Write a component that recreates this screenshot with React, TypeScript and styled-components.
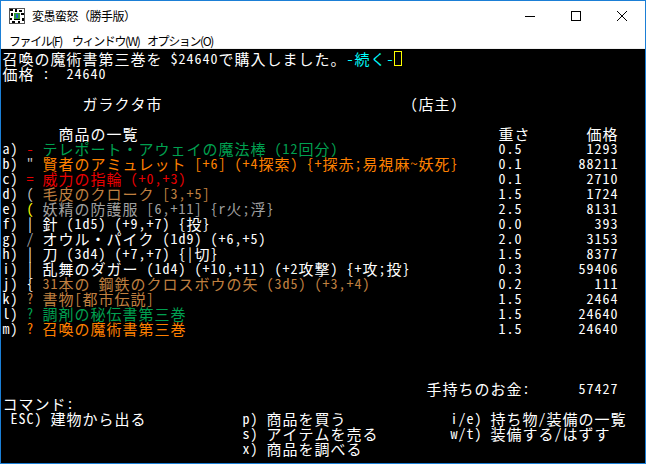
import React from 'react';
import styled, { createGlobalStyle } from 'styled-components';

const GlobalStyle = createGlobalStyle`
  html, body { margin: 0; padding: 0; background: #ffffff; }
  body { width: 646px; height: 464px; overflow: hidden; }
  * { box-sizing: border-box; }
`;

const UI_FONT = `"Noto Sans CJK JP", "Noto Sans", sans-serif`;
const TERM_FONT = `"Noto Sans Mono CJK JP", "Noto Sans CJK JP", "DejaVu Sans Mono", monospace`;

const COL = {
  white: '#ffffff',
  lwhite: '#c0c0c0',
  slate: '#a0a0a0',
  red: '#e80000',
  green: '#00a050',
  orange: '#ff8000',
  lumber: '#c08040',
  yellow: '#ffff00',
  cyan: '#00ffff',
};

const Window = styled.div`
  width: 646px;
  height: 464px;
  border: 1px solid #1b7fd6;
  display: flex;
  flex-direction: column;
  background: #ffffff;
`;

const TitleBar = styled.div`
  height: 30px;
  display: flex;
  align-items: center;
  flex: none;
`;

const IconBox = styled.div`
  width: 16px;
  height: 16px;
  margin: 0 7px 0 8px;
  display: flex;
`;

const TitleText = styled.div`
  flex: 1;
  font-family: ${UI_FONT};
  font-size: 12px;
  letter-spacing: -0.5px;
  color: #000000;
  padding-bottom: 1px;
`;

const WinButton = styled.div`
  width: 46px;
  height: 29px;
  display: flex;
  align-items: center;
  justify-content: center;
`;

const MenuBar = styled.div`
  height: 18px;
  flex: none;
  display: grid;
  grid-template-columns: 63px 75px auto;
  align-items: center;
  padding-left: 8px;
  border-bottom: 1px solid #f0f0f0;
`;

const MenuItem = styled.div`
  font-family: ${UI_FONT};
  font-size: 12px;
  letter-spacing: -1.4px;
  line-height: 18px;
  padding-top: 1px;
  color: #000000;
  white-space: nowrap;
`;

const Terminal = styled.div`
  flex: 1;
  background: #000000;
  padding: 2px 0 0 1px;
  display: flex;
  flex-direction: column;
`;

const TermLine = styled.div`
  height: 15px;
  display: flex;
  flex: none;
`;

const Cell = styled.span<{ $wide: boolean; $color: string }>`
  display: inline-block;
  width: ${(p) => (p.$wide ? 16 : 8)}px;
  height: 15px;
  line-height: 15px;
  text-align: center;
  font-family: ${TERM_FONT};
  font-size: ${(p) => (p.$wide ? 15 : 14)}px;
  color: ${(p) => p.$color};
  white-space: pre;
  overflow: visible;
`;

const Gap = styled.span<{ $cols: number }>`
  display: inline-block;
  width: ${(p) => p.$cols * 8}px;
  flex: none;
`;

const Cursor = styled.span`
  display: inline-block;
  width: 8px;
  height: 15px;
  border: 1px solid #ffff00;
`;

type Seg = [number, string, string];

const isWide = (ch: string) => {
  const c = ch.codePointAt(0) || 0;
  return (
    (c >= 0x1100 && c <= 0x115f) ||
    (c >= 0x2e80 && c <= 0xa4cf) ||
    (c >= 0xac00 && c <= 0xd7a3) ||
    (c >= 0xf900 && c <= 0xfaff) ||
    (c >= 0xfe30 && c <= 0xfe4f) ||
    (c >= 0xff00 && c <= 0xff60) ||
    (c >= 0xffe0 && c <= 0xffe6)
  );
};

const Line: React.FC<{ segs: Seg[]; cursorAt?: number }> = ({ segs, cursorAt }) => {
  const out: React.ReactNode[] = [];
  let cur = 0;
  let key = 0;
  const sorted = [...segs].sort((a, b) => a[0] - b[0]);
  for (const [col, text, color] of sorted) {
    if (col > cur) {
      out.push(<Gap key={key++} $cols={col - cur} />);
      cur = col;
    }
    for (const ch of Array.from(text)) {
      const w = isWide(ch);
      out.push(
        <Cell key={key++} $wide={w} $color={color}>
          {ch}
        </Cell>
      );
      cur += w ? 2 : 1;
    }
  }
  if (cursorAt !== undefined) {
    if (cursorAt > cur) out.push(<Gap key={key++} $cols={cursorAt - cur} />);
    out.push(<Cursor key={key++} />);
  }
  return <TermLine>{out}</TermLine>;
};

type Item = {
  letter: string;
  sym: string;
  symColor: string;
  name: string;
  color: string;
  weight: string;
  price: string;
};

const items: Item[] = [
  { letter: 'a', sym: '-', symColor: COL.red, name: 'テレポート・アウェイの魔法棒 (12回分)', color: COL.green, weight: '0.5', price: '1293' },
  { letter: 'b', sym: '"', symColor: COL.lwhite, name: '賢者のアミュレット [+6] (+4探索) {+探赤;易視麻~妖死}', color: COL.orange, weight: '0.1', price: '88211' },
  { letter: 'c', sym: '=', symColor: COL.red, name: '威力の指輪 (+0,+3)', color: COL.red, weight: '0.1', price: '2710' },
  { letter: 'd', sym: '(', symColor: COL.lwhite, name: '毛皮のクローク [3,+5]', color: COL.lumber, weight: '1.5', price: '1724' },
  { letter: 'e', sym: '(', symColor: COL.yellow, name: '妖精の防護服 [6,+11] {r火;浮}', color: COL.slate, weight: '2.5', price: '8131' },
  { letter: 'f', sym: '|', symColor: COL.white, name: '針 (1d5) (+9,+7) {投}', color: COL.white, weight: '0.0', price: '393' },
  { letter: 'g', sym: '/', symColor: COL.slate, name: 'オウル・パイク (1d9) (+6,+5)', color: COL.white, weight: '2.0', price: '3153' },
  { letter: 'h', sym: '|', symColor: COL.white, name: '刀 (3d4) (+7,+7) {|切}', color: COL.white, weight: '1.5', price: '8377' },
  { letter: 'i', sym: '|', symColor: COL.white, name: '乱舞のダガー (1d4) (+10,+11) (+2攻撃) {+攻;投}', color: COL.white, weight: '0.3', price: '59406' },
  { letter: 'j', sym: '{', symColor: COL.white, name: '31本の 鋼鉄のクロスボウの矢 (3d5) (+3,+4)', color: COL.lumber, weight: '0.2', price: '111' },
  { letter: 'k', sym: '?', symColor: COL.lumber, name: '書物[都市伝説]', color: COL.lumber, weight: '1.5', price: '2464' },
  { letter: 'l', sym: '?', symColor: COL.green, name: '調剤の秘伝書第三巻', color: COL.green, weight: '1.5', price: '24640' },
  { letter: 'm', sym: '?', symColor: COL.orange, name: '召喚の魔術書第三巻', color: COL.orange, weight: '1.5', price: '24640' },
];

const W = COL.white;

const AppIcon = () => (
  <svg width="16" height="16" viewBox="0 0 16 16">
    <rect x="0" y="0" width="16" height="16" fill="#ffffff" />
    <path d="M1 1h3v2H1zM6 1h2v3H6zM10 2h3v2h-3zM2 5h2v3H2zM12 5h3v2h-3zM1 10h2v2H1zM13 10h2v3h-2zM3 13h3v2H3zM9 13h2v2H9z" fill="#000000" />
    <path d="M5 5h6v6H5z" fill="#2f9a3a" />
    <path d="M7 6h2v4H7z" fill="#1c5fd0" />
    <path d="M5 11h6v1H5z" fill="#000000" />
    <rect x="0.5" y="0.5" width="15" height="15" fill="none" stroke="#555555" strokeWidth="1" />
  </svg>
);

export default function App() {
  const lines: React.ReactNode[] = [];
  lines.push(
    <Line
      key="l0"
      segs={[
        [0, '召喚の魔術書第三巻を $24640で購入しました。', W],
        [43, '-続く-', COL.cyan],
      ]}
      cursorAt={49}
    />
  );
  lines.push(<Line key="l1" segs={[[0, '価格 :  24640', W]]} />);
  lines.push(<Line key="l2" segs={[]} />);
  lines.push(
    <Line
      key="l3"
      segs={[
        [10, 'ガラクタ市', W],
        [51, '(店主)', W],
      ]}
    />
  );
  lines.push(<Line key="l4" segs={[]} />);
  lines.push(
    <Line
      key="l5"
      segs={[
        [7, '商品の一覧', W],
        [62, '重さ', W],
        [73, '価格', W],
      ]}
    />
  );
  items.forEach((it) => {
    lines.push(
      <Line
        key={'i' + it.letter}
        segs={[
          [0, it.letter + ')', W],
          [3, it.sym, it.symColor],
          [5, it.name, it.color],
          [62, it.weight, W],
          [77 - it.price.length, it.price, W],
        ]}
      />
    );
  });
  for (let i = 19; i < 22; i++) lines.push(<Line key={'b' + i} segs={[]} />);
  lines.push(
    <Line
      key="l22"
      segs={[
        [53, '手持ちのお金:', W],
        [72, '57427', W],
      ]}
    />
  );
  lines.push(<Line key="l23" segs={[[0, 'コマンド:', W]]} />);
  lines.push(
    <Line
      key="l24"
      segs={[
        [1, 'ESC) 建物から出る', W],
        [30, 'p) 商品を買う', W],
        [56, 'i/e) 持ち物/装備の一覧', W],
      ]}
    />
  );
  lines.push(
    <Line
      key="l25"
      segs={[
        [30, 's) アイテムを売る', W],
        [56, 'w/t) 装備する/はずす', W],
      ]}
    />
  );
  lines.push(<Line key="l26" segs={[[30, 'x) 商品を調べる', W]]} />);

  return (
    <>
      <GlobalStyle />
      <Window>
        <TitleBar>
          <IconBox>
            <AppIcon />
          </IconBox>
          <TitleText>変愚蛮怒（勝手版）</TitleText>
          <WinButton>
            <svg width="10" height="10" viewBox="0 0 10 10">
              <path d="M0 5.5h10" stroke="#000" strokeWidth="1" />
            </svg>
          </WinButton>
          <WinButton>
            <svg width="10" height="10" viewBox="0 0 10 10">
              <rect x="0.5" y="0.5" width="9" height="9" fill="none" stroke="#000" strokeWidth="1" />
            </svg>
          </WinButton>
          <WinButton>
            <svg width="10" height="10" viewBox="0 0 10 10">
              <path d="M0 0L10 10M10 0L0 10" stroke="#000" strokeWidth="1" />
            </svg>
          </WinButton>
        </TitleBar>
        <MenuBar>
          <MenuItem>ファイル(F)</MenuItem>
          <MenuItem>ウィンドウ(W)</MenuItem>
          <MenuItem>オプション(O)</MenuItem>
        </MenuBar>
        <Terminal>{lines}</Terminal>
      </Window>
    </>
  );
}
